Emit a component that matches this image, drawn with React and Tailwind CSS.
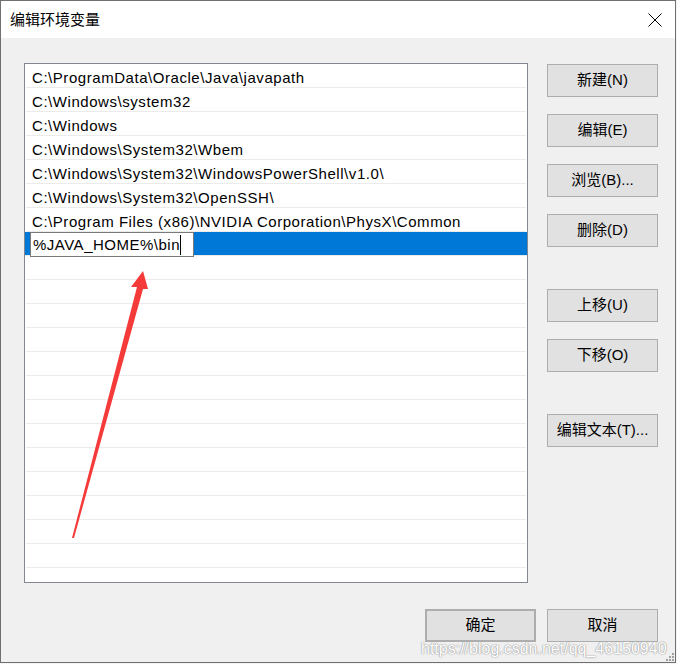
import React from "react";

const rows = [
  "C:\\ProgramData\\Oracle\\Java\\javapath",
  "C:\\Windows\\system32",
  "C:\\Windows",
  "C:\\Windows\\System32\\Wbem",
  "C:\\Windows\\System32\\WindowsPowerShell\\v1.0\\",
  "C:\\Windows\\System32\\OpenSSH\\",
  "C:\\Program Files (x86)\\NVIDIA Corporation\\PhysX\\Common",
];

function Btn({ children, className = "" }) {
  return (
    <div
      className={
        "w-[111px] h-[33px] flex items-center justify-center bg-[#e1e1e1] border border-[#adadad] text-black text-[15px] " +
        className
      }
    >
      {children}
    </div>
  );
}

export default function App() {
  const empty = Array.from({ length: 14 });
  return (
    <div
      className="w-[677px] h-[664px] bg-[#f4f4f4] text-black"
      style={{ fontFamily: '"Liberation Sans", "Noto Sans CJK SC", sans-serif' }}
    >
      <div className="relative w-[676px] h-[663px] border border-[#707070] bg-[#f0f0f0] flex flex-col">
        {/* title bar */}
        <div className="h-[37px] bg-white flex items-center justify-between pl-[9px] pr-[13px] shrink-0">
          <span className="text-[15px] leading-none">编辑环境变量</span>
          <svg width="14" height="14" viewBox="0 0 14 14" className="block">
            <path d="M0.5 0.5 L13.5 13.5 M13.5 0.5 L0.5 13.5" stroke="#000" strokeWidth="1" />
          </svg>
        </div>

        {/* body */}
        <div className="flex flex-col pl-[23px] pt-[25px] pr-[17px]">
          <div className="flex">
            <div className="w-[504px] h-[520px] border border-[#828790] bg-white overflow-hidden">
              {rows.map((r, i) => (
                <div
                  key={i}
                  className="h-[24px] mx-px border-b border-[#ebebeb] flex items-start pl-[6px] pt-[5px] text-[15px] leading-[17px] tracking-[0.55px] whitespace-nowrap"
                >
                  {r}
                </div>
              ))}
              <div className="h-[24px] bg-[#0078d7] relative border-b border-[#ebebeb]">
                <div className="absolute left-[5px] top-0 w-[164px] h-[25px] bg-white border border-[#7a7a7a] flex items-start pl-[2px] pt-[3px] text-[15px] leading-[17px] tracking-[0.5px] whitespace-nowrap">
                  %JAVA_HOME%\bin
                  <span className="inline-block w-px h-[20px] bg-black ml-0 -mt-[1px]"></span>
                </div>
              </div>
              {empty.map((_, i) => (
                <div key={i} className="h-[24px] mx-px border-b border-[#ebebeb]"></div>
              ))}
            </div>
            <div className="ml-[19px] pt-[1px] flex flex-col">
              <Btn>新建(N)</Btn>
              <Btn className="mt-[17px]">编辑(E)</Btn>
              <Btn className="mt-[17px]">浏览(B)...</Btn>
              <Btn className="mt-[17px]">删除(D)</Btn>
              <Btn className="mt-[42px]">上移(U)</Btn>
              <Btn className="mt-[17px]">下移(O)</Btn>
              <Btn className="mt-[42px]">编辑文本(T)...</Btn>
            </div>
          </div>
          <div className="flex justify-end mt-[26px] gap-[11px]">
            <Btn className="border-2 border-[#0078d7]">确定</Btn>
            <Btn>取消</Btn>
          </div>
        </div>

        {/* red arrow */}
        <svg
          className="absolute left-[-1px] top-[-1px] pointer-events-none"
          width="677"
          height="664"
          viewBox="0 0 677 664"
        >
          <polygon points="143,271 131,287 137,287 72,538 74,538 143,289 148,289" fill="#f53a3a" />
        </svg>

        {/* watermark */}
        <div
          className="absolute left-[420px] top-[636px] text-[16px] text-white whitespace-nowrap pointer-events-none"
          style={{
            fontFamily: '"Liberation Sans", sans-serif',
            textShadow: "0 0 1px #9a9a9a, 0 0 1px #9a9a9a, 0 0 2px #c0c0c0",
          }}
        >
          https://blog.csdn.net/qq_46150940
        </div>

        {/* resize grip */}
        <svg className="absolute right-0 bottom-0" width="9" height="9" viewBox="0 0 9 9">
          <rect x="6" y="0" width="2" height="2" fill="#a0a0a0" />
          <rect x="3" y="3" width="2" height="2" fill="#a0a0a0" />
          <rect x="6" y="3" width="2" height="2" fill="#a0a0a0" />
          <rect x="0" y="6" width="2" height="2" fill="#a0a0a0" />
          <rect x="3" y="6" width="2" height="2" fill="#a0a0a0" />
          <rect x="6" y="6" width="2" height="2" fill="#a0a0a0" />
        </svg>
      </div>
    </div>
  );
}
